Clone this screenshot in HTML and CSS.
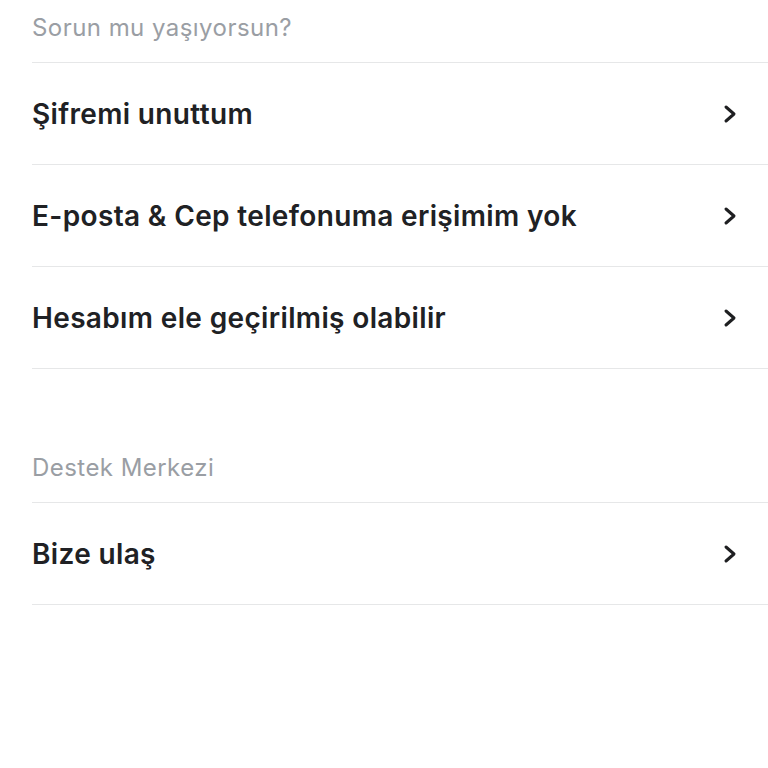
FILE: index.html
```html
<!doctype html>
<html lang="tr">
<head>
	<meta charset="UTF-8">
	<title>Yardım</title>
	<link rel="stylesheet" href="styles.css">
</head>
<body>
	<div class="page">
		<div class="section">
			<div class="section-title">Sorun mu yaşıyorsun?</div>
			<a class="row" href="#">
				<span class="label">Şifremi unuttum</span>
				<svg class="chev" viewBox="0 0 16 20"><path d="M4 3 L12 10 L4 17"/></svg>
			</a>
			<a class="row" href="#">
				<span class="label">E-posta &amp; Cep telefonuma erişimim yok</span>
				<svg class="chev" viewBox="0 0 16 20"><path d="M4 3 L12 10 L4 17"/></svg>
			</a>
			<a class="row" href="#">
				<span class="label">Hesabım ele geçirilmiş olabilir</span>
				<svg class="chev" viewBox="0 0 16 20"><path d="M4 3 L12 10 L4 17"/></svg>
			</a>
		</div>
		<div class="section second">
			<div class="section-title">Destek Merkezi</div>
			<a class="row" href="#">
				<span class="label">Bize ulaş</span>
				<svg class="chev" viewBox="0 0 16 20"><path d="M4 3 L12 10 L4 17"/></svg>
			</a>
		</div>
	</div>
</body>
</html>
```

FILE: styles.css
```css
html{
	height: 100%;
}
body{
	margin: 0;
	height: 100%;
	background: #fff;
	font-family: Inter, "Noto Sans", sans-serif;
}
.page{
	padding-left: 32px;
}
.section-title{
	height: 62px;
	line-height: 56px;
	font-size: 24px;
	color: #9a9ea4;
	letter-spacing: 0.45px;
	border-bottom: 1px solid #e6e7e8;
}
.second{
	margin-top: 71px;
}
.row{
	display: flex;
	align-items: center;
	justify-content: space-between;
	height: 101px;
	border-bottom: 1px solid #e6e7e8;
	text-decoration: none;
	color: #202124;
	padding-right: 30px;
}
.label{
	font-size: 28px;
	font-weight: 600;
	letter-spacing: 0.35px;
}
.chev{
	width: 16px;
	height: 20px;
	fill: none;
	stroke: #1e1f21;
	stroke-width: 3;
	stroke-linecap: round;
	stroke-linejoin: round;
}
```
